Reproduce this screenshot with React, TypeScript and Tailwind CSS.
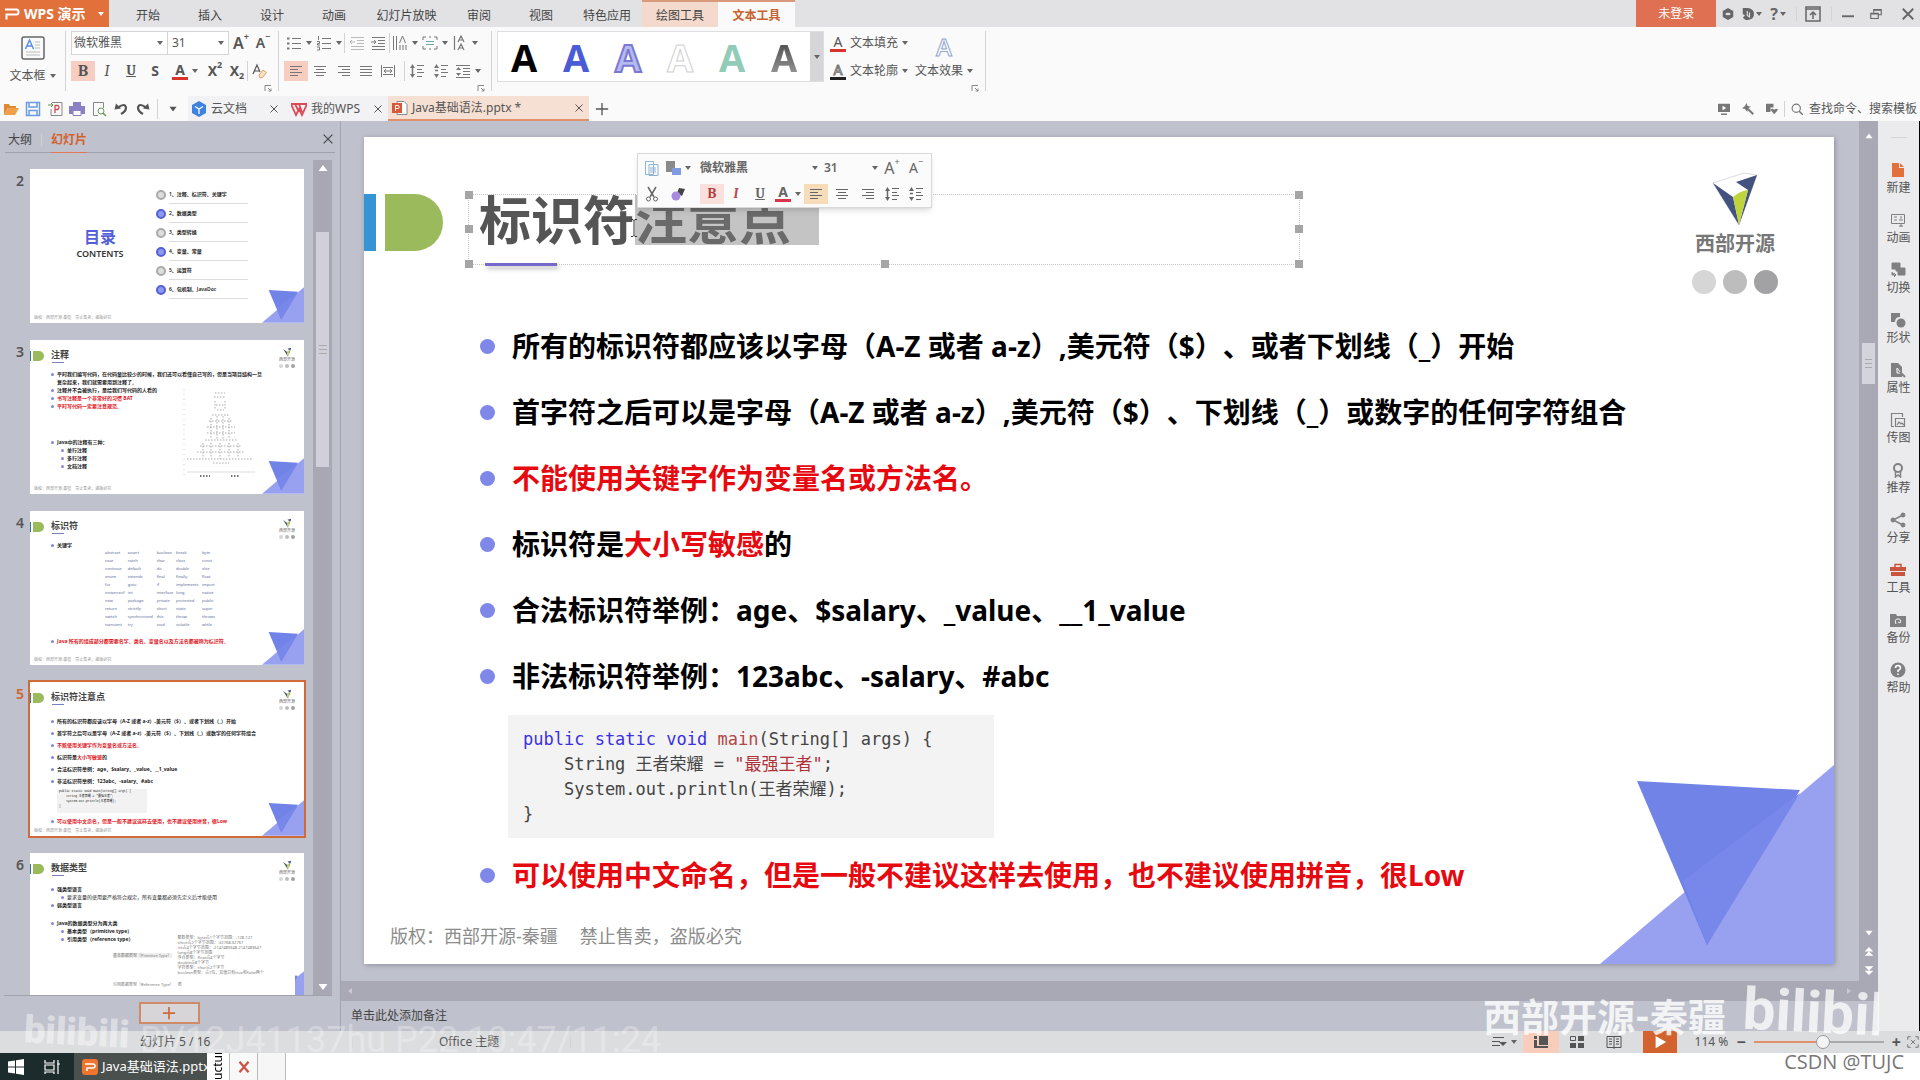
import type { ReactNode } from "react"
import { clsx } from "clsx"

const menuItems = [
  { label: "开始", width: "w-[62px]" },
  { label: "插入", width: "w-[62px]" },
  { label: "设计", width: "w-[62px]" },
  { label: "动画", width: "w-[62px]" },
  { label: "幻灯片放映", width: "w-[83px]" },
  { label: "审阅", width: "w-[62px]" },
  { label: "视图", width: "w-[62px]" },
  { label: "特色应用", width: "w-[70px]" },
]

const keywords = [
  ["abstract", "assert", "boolean", "break", "byte"],
  ["case", "catch", "char", "class", "const"],
  ["continue", "default", "do", "double", "else"],
  ["enum", "extends", "final", "finally", "float"],
  ["for", "goto", "if", "implements", "import"],
  ["instanceof", "int", "interface", "long", "native"],
  ["new", "package", "private", "protected", "public"],
  ["return", "strictfp", "short", "static", "super"],
  ["switch", "synchronized", "this", "throw", "throws"],
  ["transient", "try", "void", "volatile", "while"],
]

const contents = ["1、注释、标识符、关键字", "2、数据类型", "3、类型转换", "4、变量、常量", "5、运算符", "6、包机制、JavaDoc"]

function Caret({ className = "text-[#666]" }: { className?: string }) {
  return (
    <svg viewBox="0 0 6 4" className={clsx("h-1 w-1.5 shrink-0", className)} fill="currentColor">
      <path d="M0 0h6L3 4z" />
    </svg>
  )
}

function Icon({ children, className = "size-4", box = 16 }: { children: ReactNode; className?: string; box?: number }) {
  return (
    <svg viewBox={`0 0 ${box} ${box}`} className={clsx("shrink-0", className)} fill="none" stroke="currentColor">
      {children}
    </svg>
  )
}

function Tool({ label, children, active, className = "w-6" }: { label: string; children: ReactNode; active?: boolean; className?: string }) {
  return (
    <button aria-label={label} className={clsx("flex h-5 shrink-0 items-center justify-center gap-1", className, active && "bg-[#f6cdc0]")}>
      {children}
    </button>
  )
}

function Divider({ className = "h-5" }: { className?: string }) {
  return <span className={clsx("w-px shrink-0 bg-[#d3d3d6]", className)} />
}

function Launcher() {
  return (
    <button aria-label="更多设置" className="absolute right-1.5 bottom-1 text-[#888]">
      <Icon className="size-2" box={8}>
        <path d="M1 7V1.5h6M4 4l3 3M7 4.5V7H4.5" />
      </Icon>
    </button>
  )
}

// Letter with a small mark at its upper right, e.g. A+ or X2
function Marked({ letter, mark, className }: { letter: string; mark: string; className?: string }) {
  return (
    <span className={clsx("flex items-start", className)}>
      {letter}
      <span className="text-[9px] leading-2">{mark}</span>
    </span>
  )
}

const alignPaths = {
  left: "M2 3.5h12M2 6.5h8M2 9.5h12M2 12.5h8",
  center: "M2 3.5h12M4 6.5h8M2 9.5h12M4 12.5h8",
  right: "M2 3.5h12M6 6.5h8M2 9.5h12M6 12.5h8",
  justify: "M2 3.5h12M2 6.5h12M2 9.5h12M2 12.5h12",
}

function AlignIcon({ kind }: { kind: keyof typeof alignPaths }) {
  return (
    <Icon>
      <path d={alignPaths[kind]} />
    </Icon>
  )
}

function SpacingIcon({ down }: { down?: boolean }) {
  return (
    <Icon>
      <path d="M8 2.5h7M8 6.5h5M8 9.5h7M8 13.5h5" />
      <path d={down ? "M2 7.5h3" : "M3.5 5v6"} strokeWidth="1.5" />
      <path d="M1 5l2.5-4L6 5zM1 11l2.5 4L6 11z" fill="currentColor" stroke="none" />
    </Icon>
  )
}

function TitleBar() {
  return (
    <header className="flex h-[27px] shrink-0 bg-[#e2e2e4] text-xs text-[#444]">
      <button className="flex w-[109px] shrink-0 items-center bg-[#e2703a] pl-1 text-sm font-bold text-white">
        <Icon>
          <path d="M1 3.500h11.5q2 0 2 2.5t-2 2.5H2.500v5" strokeWidth="2" />
        </Icon>
        <span className="ml-1 whitespace-nowrap">WPS 演示</span>
        <Caret className="ml-3 text-white" />
      </button>
      <nav className="ml-2 flex shrink-0">
        {menuItems.map((item) => (
          <button key={item.label} className={clsx("pt-1", item.width)}>
            {item.label}
          </button>
        ))}
        <button className="w-[76px] border-t-2 border-[#d99a7c] bg-[#f3dacd] pt-0.5">绘图工具</button>
        <button className="w-[77px] border-t-2 border-[#d99a7c] bg-[#fafafb] pt-0.5 font-bold text-[#c8632f]">文本工具</button>
      </nav>
      <div className="ml-auto flex shrink-0 items-center text-[#666]">
        <button className="h-full w-20 bg-[#e07052] text-white">未登录</button>
        <button aria-label="设置" className="ml-1.5">
          <Icon className="size-3">
            <path d="M8 0l7 4v8l-7 4-7-4V4z" fill="currentColor" stroke="none" />
            <path d="M5 8h6" stroke="#e2e2e4" strokeWidth="3" />
          </Icon>
        </button>
        <button aria-label="皮肤" className="ml-2 flex items-center gap-0.5">
          <Icon className="size-3">
            <path d="M1 0h7q8 1 8 8t-8 8H5l-4-3 3-3-3-2z" fill="currentColor" stroke="none" />
            <path d="M7 4v6l3 2V6" stroke="#e2e2e4" strokeWidth="1.5" />
          </Icon>
          <Caret />
        </button>
        <button aria-label="帮助" className="ml-2 flex items-center gap-0.5 text-base font-bold">
          ? <Caret />
        </button>
        <Divider className="ml-2.5 h-3.5 bg-[#b5b5b8]" />
        <button aria-label="隐藏功能区" className="ml-2">
          <Icon>
            <path d="M1 1h14v14H1zM1 3h14M8 13V6M5 9l3-3 3 3" strokeWidth="1.5" />
          </Icon>
        </button>
        <Divider className="mr-2.5 ml-2.5 h-3.5 bg-[#b5b5b8]" />
        <button aria-label="最小化">
          <Icon className="size-3">
            <path d="M0 11h16" strokeWidth="2.5" />
          </Icon>
        </button>
        <button aria-label="还原" className="ml-4">
          <Icon className="size-3">
            <path d="M1 7h10v7H1zM5 6V2h10v7h-4M5 3h10M1 8h10" strokeWidth="1.5" />
          </Icon>
        </button>
        <button aria-label="关闭" className="mr-1.5 ml-5">
          <Icon className="size-3">
            <path d="M1 1l14 14M15 1L1 15" strokeWidth="2.5" />
          </Icon>
        </button>
      </div>
    </header>
  )
}

const gallery = [
  "text-black",
  "text-[#4a5bd8]",
  "text-[#b4baf2] [-webkit-text-stroke:2px_#7a78d0]",
  "text-white [-webkit-text-stroke:1px_#cfd0d2]",
  "text-[#93cbb9]",
  "bg-linear-to-b from-[#3c3c3c] to-[#a5a5a5] bg-clip-text text-transparent",
]

function Ribbon() {
  return (
    <section className="flex h-[69px] shrink-0 bg-[#fafafb] text-xs text-[#555]">
      <button className="flex w-[65px] shrink-0 flex-col items-center gap-2 pt-[9px]">
        <Icon className="size-6" box={24}>
          <rect x="1" y="1" width="22" height="22" rx="2" stroke="#666" strokeWidth="1.5" />
          <path d="M14 6h5M14 9h5M14 12h5M5 16h14M5 19h14" stroke="#bbb" />
          <path d="M4.5 13l4-9 4 9M6 10h5" stroke="#5b8fdc" strokeWidth="1.5" />
        </Icon>
        <span className="flex items-center gap-1 leading-4 whitespace-nowrap">
          文本框 <Caret />
        </span>
      </button>
      <Divider className="mt-1 h-[60px]" />
      <div className="relative w-[212px] shrink-0 pt-1 pl-[5px]">
        <div className="flex items-center">
          <label className="flex h-6 w-[97px] items-center border border-[#d5d5d8] bg-white pr-1 pl-0.5">
            <select aria-label="字体" className="min-w-0 flex-1 appearance-none text-[#555]">
              <option>微软雅黑</option>
            </select>
            <Caret />
          </label>
          <label className="-ml-px flex h-6 w-[62px] items-center border border-[#d5d5d8] bg-white pr-1 pl-1">
            <select aria-label="字号" className="min-w-0 flex-1 appearance-none text-[#555]">
              <option>31</option>
            </select>
            <Caret />
          </label>
          <Tool label="增大字号" className="w-6">
            <Marked letter="A" mark="+" className="text-base leading-5 font-semibold" />
          </Tool>
          <Tool label="减小字号" className="w-5">
            <Marked letter="A" mark="−" className="text-sm leading-5 font-semibold" />
          </Tool>
        </div>
        <div className="mt-1.5 flex items-center text-sm font-bold">
          <Tool label="加粗" active><span className="font-serif text-base">B</span></Tool>
          <Tool label="倾斜"><span className="font-serif text-base font-normal italic">I</span></Tool>
          <Tool label="下划线"><span className="font-serif underline">U</span></Tool>
          <Tool label="阴影">S</Tool>
          <Tool label="字体颜色" className="w-9">
            <span className="w-4 border-b-[3px] border-[#d8342c] leading-3.5">A</span>
            <Caret />
          </Tool>
          <Tool label="上标"><Marked letter="X" mark="2" className="leading-5" /></Tool>
          <Tool label="下标" className="w-5">
            <span className="flex items-end leading-5">X<span className="text-[9px] leading-2.5">2</span></span>
          </Tool>
          <Divider />
          <Tool label="清除格式">
            <Icon>
              <path d="M1 11L5 2l3 7M2.5 8H7" strokeWidth="1.2" />
              <path d="M7 12l4-5 3.5 2.500-4 5-2.500.5z" stroke="#e0a060" fill="#f8e3c8" />
            </Icon>
          </Tool>
        </div>
        <Launcher />
      </div>
      <Divider className="mt-1 h-[60px]" />
      <div className="relative w-[212px] shrink-0 pt-1.5 pl-[5px] text-[#777]">
        <div className="flex items-center">
          <Tool label="项目符号" className="w-[30px]">
            <Icon>
              <path d="M6 3.5h9M6 8.5h9M6 13.5h9" />
              <path d="M1 3.5h2.500M1 8.500h2.500M1 13.5h2.500" strokeWidth="2" />
            </Icon>
            <Caret />
          </Tool>
          <Tool label="编号" className="w-[30px]">
            <Icon>
              <path d="M6 3.5h9M6 8.5h9M6 13.5h9" />
              <path d="M2.5 1v4M1 6.500h2.500v2h-2V10H4M1 12h2.500v3H1" />
            </Icon>
            <Caret />
          </Tool>
          <Divider />
          <Tool label="减少缩进">
            <Icon className="size-4 text-[#bbb]">
              <path d="M2 2.5h13M8 5.5h7M8 8.5h7M2 11.5h13M2 14.5h13M6 7H1M3 5L1 7l2 2" />
            </Icon>
          </Tool>
          <Tool label="增加缩进" className="w-[18px]">
            <Icon>
              <path d="M2 2.5h13M8 5.5h7M8 8.5h7M2 11.5h13M2 14.5h13M1 7h5M4 5l2 2-2 2" />
            </Icon>
          </Tool>
          <Divider className="ml-0.5 h-5" />
          <Tool label="文字方向" className="w-[30px]">
            <Icon>
              <path d="M1.5 1v14M4.5 1v14M8 10v5M11 10v5M14 10v5M7.5 8l3-7 3 7" />
            </Icon>
            <Caret />
          </Tool>
          <Tool label="对齐文本" className="w-[30px]">
            <Icon>
              <path d="M1 5V2h3M12 2h3v3M15 11v3h-3M4 14H1v-3M7 2h2M7 14h2" />
              <path d="M4 6.5h8M4 9.5h8" stroke="#6fa8a8" />
            </Icon>
            <Caret />
          </Tool>
          <Tool label="字符间距" className="w-[30px]">
            <Icon>
              <path d="M2.5 1v14M6 7l3-6 3 6M7 5h4M6 15l3-6 3 6M7 13h4" strokeWidth="1.2" />
            </Icon>
            <Caret />
          </Tool>
        </div>
        <div className="mt-2 flex items-center">
          <Tool label="左对齐" active><AlignIcon kind="left" /></Tool>
          <Tool label="居中"><AlignIcon kind="center" /></Tool>
          <Tool label="右对齐"><AlignIcon kind="right" /></Tool>
          <Tool label="两端对齐" className="w-5"><AlignIcon kind="justify" /></Tool>
          <Tool label="分散对齐">
            <Icon>
              <path d="M1.5 2v12M14.5 2v12M3 4.5h10M3 11.5h10M4 8h8M6 6L4 8l2 2M10 6l2 2-2 2" />
            </Icon>
          </Tool>
          <Divider className="ml-1 h-5" />
          <Tool label="段前间距"><SpacingIcon /></Tool>
          <Tool label="段后间距"><SpacingIcon down /></Tool>
          <Tool label="行距" className="w-[30px]">
            <Icon>
              <path d="M1 2.5h14M8 5.5h7M8 8.5h7M8 11.5h7M1 14.5h14" />
              <path d="M1 7l2.5-3L6 7zM1 10l2.5 3L6 10z" fill="currentColor" stroke="none" />
            </Icon>
            <Caret />
          </Tool>
        </div>
        <Launcher />
      </div>
      <Divider className="mt-1 h-[60px]" />
      <div className="mt-1 ml-[5px] flex h-[51px] shrink-0 border border-[#dedee0] bg-white">
        {gallery.map((style, i) => (
          <button key={style} aria-label={`艺术字 ${i + 1}`} className="flex w-[52px] items-center justify-center">
            <span className={clsx("font-['Open_Sans'] text-[38px] leading-[48px] font-bold", style)}>A</span>
          </button>
        ))}
        <button aria-label="更多艺术字" className="flex w-[13px] items-center justify-center bg-[#d6d6da]">
          <Caret />
        </button>
      </div>
      <div className="flex w-[84px] shrink-0 flex-col gap-3 pt-2 pl-1.5">
        <button className="flex h-4 items-center gap-1 whitespace-nowrap">
          <span className="w-4 shrink-0 border-b-[3px] border-[#d8342c] text-sm leading-3.5">A</span>
          文本填充 <Caret />
        </button>
        <button className="flex h-4 items-center gap-1 whitespace-nowrap">
          <span className="w-4 shrink-0 border-b-[3px] border-[#222] text-sm leading-3.5 text-white [-webkit-text-stroke:1px_#777]">A</span>
          文本轮廓 <Caret />
        </button>
      </div>
      <div className="relative w-[77px] shrink-0 pl-[7px]">
        <button className="flex flex-col items-center pt-2">
          <span className="font-['Open_Sans'] text-2xl leading-6 font-semibold text-white [-webkit-text-stroke:1px_#8fa3cc]">A</span>
          <span className="mt-1 flex items-center gap-1 leading-4 whitespace-nowrap">
            文本效果 <Caret />
          </span>
        </button>
        <Launcher />
      </div>
      <Divider className="mt-1 h-[60px]" />
    </section>
  )
}

function DocTab({ icon, title, className }: { icon: ReactNode; title: string; className?: string }) {
  return (
    <div className={clsx("flex shrink-0 items-center pr-1.5", className)}>
      {icon}
      <button className="ml-1 whitespace-nowrap">{title}</button>
      <button aria-label={`关闭 ${title}`} className="ml-auto">
        <Icon className="size-2">
          <path d="M1 1l14 14M15 1L1 15" strokeWidth="2" />
        </Icon>
      </button>
    </div>
  )
}

function DocTabs() {
  return (
    <section className="flex h-[25px] shrink-0 bg-[#fafafb] text-xs text-[#555]">
      <div className="flex w-[188px] shrink-0 items-center gap-1.5 pl-[3px]">
        <button aria-label="打开">
          <Icon>
            <path d="M1 14V3h5l1 2h6v2H5z" fill="#e08a35" stroke="none" />
            <path d="M1 14l4-7h11l-4 7z" fill="#f0a04a" stroke="none" />
          </Icon>
        </button>
        <button aria-label="保存" className="text-[#6b9be0]">
          <Icon>
            <path d="M1.5 1.5h13v13h-13zM4 2v4h8V2M4 14V9.5h8V14" strokeWidth="1.5" />
          </Icon>
        </button>
        <button aria-label="输出为PDF" className="text-[#888]">
          <Icon>
            <path d="M5 1.5h10v13H4V8" />
            <path d="M8 12V4.5h3q2 1.500 0 4H8" stroke="#d05050" strokeWidth="1.300" />
            <path d="M1 4h5M4 2l2 2-2 2" stroke="#5a9a4a" />
          </Icon>
        </button>
        <button aria-label="打印">
          <Icon>
            <path d="M4 1h8v4H4zM0 5h16v8H0z" fill="#8c80c4" stroke="none" />
            <path d="M4 9.5h8v5H4z" fill="#fff" stroke="#8c80c4" />
          </Icon>
        </button>
        <button aria-label="打印预览" className="text-[#888]">
          <Icon>
            <path d="M7 14.5H2.500v-13h10V7" />
            <circle cx="10" cy="10" r="3" stroke="#6d9a55" />
            <path d="M12 12l3 3" stroke="#6d9a55" strokeWidth="1.5" />
          </Icon>
        </button>
        <button aria-label="撤销" className="text-[#555]">
          <Icon>
            <path d="M5 6.5q7-5 8 0 0 4-5 6.500" strokeWidth="2.200" />
            <path d="M1.5 8.500l1.500-6 5 5z" fill="currentColor" stroke="none" />
          </Icon>
        </button>
        <button aria-label="恢复" className="text-[#555]">
          <Icon>
            <path d="M11 6.5q-7-5-8 0 0 4 5 6.500" strokeWidth="2.200" />
            <path d="M14.5 8.500l-1.500-6-5 5z" fill="currentColor" stroke="none" />
          </Icon>
        </button>
        <Divider />
        <button aria-label="自定义" className="ml-1.5"><Caret className="scale-125 text-[#555]" /></button>
      </div>
      <DocTab
        title="云文档"
        className="w-24 bg-[#f2f2f4] pl-[3px]"
        icon={
          <Icon>
            <path d="M8 0l7 4v8l-7 4-7-4V4z" fill="#3f82e0" stroke="none" />
            <path d="M4 5.5l4 2.500 4-2.500M8 8v5" stroke="#fff" strokeWidth="1.300" />
          </Icon>
        }
      />
      <DocTab
        title="我的WPS"
        className="w-[104px] bg-[#f2f2f4] pl-[7px]"
        icon={
          <Icon className="size-4 text-[#dc4a55]">
            <path d="M0 3h16l-5 11-3-6-3 6zM4 3l4 8M8 3l3 8" strokeWidth="1.8" />
          </Icon>
        }
      />
      <DocTab
        title="Java基础语法.pptx *"
        className="w-[201px] border-b-2 border-[#e0906c] bg-[#f5e0d3] pl-1"
        icon={
          <Icon>
            <path d="M5 1.5h7l3 3v10H5z" fill="#fff" stroke="#888" />
            <path d="M0 3h10v10H0z" fill="#d8593a" stroke="none" />
            <path d="M3.5 11V5.500h3q1.500 1.500 0 3h-3" stroke="#fff" />
          </Icon>
        }
      />
      <button aria-label="新建标签" className="ml-1.5">
        <Icon className="size-3.5">
          <path d="M8 1v14M1 8h14" strokeWidth="1.5" />
        </Icon>
      </button>
      <div className="ml-auto flex shrink-0 items-center text-[#777]">
        <button aria-label="播放">
          <Icon className="size-3">
            <path d="M0 1h16v11H0zM4 14h8v2H4z" fill="currentColor" stroke="none" />
            <path d="M6 3.5v6l5-3z" fill="#fff" stroke="none" />
          </Icon>
        </button>
        <button aria-label="魔法棒" className="ml-3">
          <Icon className="size-3">
            <path d="M6 6l9 9" strokeWidth="2.5" />
            <path d="M6 0l1.500 4L12 5 8 7l-1 5-3-4-4-1 4-3z" fill="currentColor" stroke="none" />
          </Icon>
        </button>
        <button aria-label="收藏" className="ml-3">
          <Icon className="size-3">
            <path d="M0 1h10v5H6v6H0zM11 15L6 9q2-3 5 0 3-3 5 0z" fill="currentColor" stroke="none" />
          </Icon>
        </button>
        <Divider className="mx-1.5 h-4" />
        <label className="flex items-center gap-1.5">
          <Icon className="size-3">
            <circle cx="7" cy="7" r="5.5" strokeWidth="1.5" />
            <path d="M11 11l5 5" strokeWidth="2" />
          </Icon>
          <input aria-label="查找命令" className="w-[111px] text-[#555] outline-none" defaultValue="查找命令、搜索模板" />
        </label>
      </div>
    </section>
  )
}

function Corner({ className }: { className: string }) {
  return (
    <svg viewBox="0 0 234 199" className={clsx("absolute right-0 bottom-0", className)}>
      <path d="M0 199L234 0v199z" fill="#98a0f0" />
      <path d="M37 16l163 9-93 155z" fill="#7183e6" />
      <path d="M83 116L200 28l-93 152z" fill="#7887ea" />
    </svg>
  )
}

function LogoMark({ className }: { className: string }) {
  return (
    <svg viewBox="0 0 46 54" className={className}>
      <path d="M1 11L32 1l13 2-18 50z" fill="#fff" stroke="#c5c5cc" strokeWidth=".6" />
      <path d="M1 11l20 14 6 28z" fill="#43527f" />
      <path d="M45 3L24 10l12 8-9 35z" fill="#43527f" />
      <path d="M21 25q7-6 15-7l-9 35z" fill="#bfd43c" />
    </svg>
  )
}

function ThumbLine({ children, red, sub, plain }: { children: ReactNode; red?: boolean; sub?: boolean; plain?: boolean }) {
  return (
    <p className={clsx("flex items-center gap-[3px] whitespace-nowrap", sub && "pl-2.5", red && "text-[#e0141c]", !plain && "font-bold")}>
      <i className="size-[3px] shrink-0 rounded-full bg-[#7f87e8]" />
      <span>{children}</span>
    </p>
  )
}

function Thumb({ index, title, children, active }: { index: number; title?: string; children: ReactNode; active?: boolean }) {
  return (
    <li className="flex shrink-0">
      <span className={clsx("w-[30px] pt-0.5 pr-1.5 text-right text-sm font-semibold", active ? "text-[#d2622e]" : "text-[#555]")}>{index}</span>
      <div
        className={clsx(
          "relative h-[154px] w-[274px] overflow-hidden bg-white text-[5px] leading-2 text-[#222]",
          active && "outline-2 outline-[#cf6a3a]",
        )}
      >
        {title && (
          <div className="flex h-[30px] items-start pt-[9px]">
            <i className="mt-0.5 h-2.5 w-px bg-[#2f7a8a]" />
            <i className="mt-0.5 ml-0.5 h-2.5 w-[11px] rounded-r-full bg-[#9aba5c]" />
            <div className="ml-[7px] text-[9px] leading-[11px] font-semibold text-[#444]">
              {title}
              <i className="mt-0.5 ml-px block h-px w-3 bg-[#7a7fc0]" />
            </div>
            <div className="mr-[9px] ml-auto flex flex-col items-center text-[4px] leading-[6px] text-[#666]">
              <LogoMark className="-mt-0.5 h-2.5" />
              <span>西部开源</span>
              <span className="mt-px flex gap-0.5">
                <i className="size-1 rounded-full bg-[#d6d6d6]" />
                <i className="size-1 rounded-full bg-[#bdbdbd]" />
                <i className="size-1 rounded-full bg-[#a2a2a4]" />
              </span>
            </div>
          </div>
        )}
        {children}
        <p className="absolute bottom-0.5 left-1 text-[4px] leading-1.5 text-[#999]">版权：西部开源-秦疆　禁止售卖，盗版必究</p>
        <Corner className={clsx("h-9 w-[42px]", index === 6 && "[clip-path:inset(0_0_0_33px)]")} />
      </div>
    </li>
  )
}

function SlidePanel() {
  return (
    <aside className="flex w-[341px] shrink-0 flex-col border-r border-[#a3a4b2] bg-[#bfc1cc] text-[#444]">
      <div className="mx-[5px] flex h-8 shrink-0 items-center border-b border-[#9fa1ac] pl-[3px] text-xs">
        <button className="pt-1.5">大纲</button>
        <Divider className="mx-[9px] mt-1.5 h-3 bg-[#777]" />
        <button className="h-full pt-1.5 font-bold text-[#d2622e] shadow-[0_1px_0_#e0765a]">幻灯片</button>
        <button aria-label="关闭窗格" className="ml-auto pt-1">
          <Icon className="mr-0.5 size-2.5">
            <path d="M1 1l14 14M15 1L1 15" strokeWidth="1.8" />
          </Icon>
        </button>
      </div>
      <div className="mr-2 ml-1 flex min-h-0 flex-1 border-b border-[#9fa1ac]">
        <ol className="-ml-1 flex min-h-0 flex-1 flex-col gap-[17px] overflow-hidden pt-4">
          <Thumb index={2}>
            <div className="flex">
              <div className="w-[126px] pt-[58px] pl-[14px] text-center">
                <p className="text-base leading-5 font-bold text-[#5560d8]">目录</p>
                <p className="text-[9px] leading-3.5 font-semibold text-[#333]">CONTENTS</p>
              </div>
              <ul className="w-[92px] pt-4">
                {contents.map((item, i) => (
                  <li key={item} className="flex h-[19px] items-center gap-[3px] font-semibold whitespace-nowrap">
                    <i className={clsx("size-2.5 shrink-0 rounded-full border-2", i % 2 ? "border-[#5560d8] bg-[#8f97ee]" : "border-[#aaa] bg-[#ddd]")} />
                    <span className="flex h-full flex-1 items-center border-b border-[#ddd]">{item}</span>
                  </li>
                ))}
              </ul>
            </div>
          </Thumb>
          <Thumb index={3} title="注释">
            <div className="flex flex-col pl-[21px]">
              <ThumbLine>平时我们编写代码，在代码量比较少的时候，我们还可以看懂自己写的，但是当项目结构一旦</ThumbLine>
              <p className="pl-1.5 font-bold">复杂起来，我们就需要用到注释了。</p>
              <ThumbLine>注释并不会被执行，是给我们写代码的人看的</ThumbLine>
              <ThumbLine red>书写注释是一个非常好的习惯 BAT</ThumbLine>
              <ThumbLine red>平时写代码一定要注意规范。</ThumbLine>
              <div className="mt-7 flex flex-col">
                <ThumbLine>Java中的注释有三种：</ThumbLine>
                <ThumbLine sub>单行注释</ThumbLine>
                <ThumbLine sub>多行注释</ThumbLine>
                <ThumbLine sub>文档注释</ThumbLine>
              </div>
            </div>
            <svg viewBox="0 0 74 94" className="absolute top-12 left-[153px] h-[94px] w-[74px]" fill="none" stroke="#aaa" strokeDasharray="1.5 1.5">
              <path d="M1 1v90" stroke="#ccc" strokeDasharray="1 4" />
              <path d="M32 5h10M31 9h12M32 13v9M42 13v9M33 17h8M34 22h7M29 27h18M26 33h24M24 39h28M24 45h28M28 30v20M34 28v24M40 28v24M46 30v20M22 52h32M17 58h42M14 64h48M20 55v14M28 55v14M37 55v16M46 55v14M55 55v14M4 71h66M30 75h16" />
              <path d="M4 84h68" stroke="#ddd" strokeDasharray="none" />
              <path d="M17 88h10M48 88h9" stroke="#777" strokeWidth="2" />
            </svg>
          </Thumb>
          <Thumb index={4} title="标识符">
            <div className="pl-[21px]">
              <ThumbLine>关键字</ThumbLine>
              <table className="ml-[54px] w-28 text-left text-[4px] leading-2 text-[#5a6a98]">
                <tbody>
                  {keywords.map((row) => (
                    <tr key={row[0]}>
                      {row.map((word) => (
                        <td key={word}>{word}</td>
                      ))}
                    </tr>
                  ))}
                </tbody>
              </table>
              <div className="mt-2">
                <ThumbLine red>Java 所有的组成部分都需要名字。类名、变量名以及方法名都被称为标识符。</ThumbLine>
              </div>
            </div>
          </Thumb>
          <Thumb index={5} title="标识符注意点" active>
            <div className="flex flex-col gap-1 pt-[5px] pl-[21px]">
              <ThumbLine>所有的标识符都应该以字母（A-Z 或者 a-z）,美元符（$）、或者下划线（_）开始</ThumbLine>
              <ThumbLine>首字符之后可以是字母（A-Z 或者 a-z）,美元符（$）、下划线（_）或数字的任何字符组合</ThumbLine>
              <ThumbLine red>不能使用关键字作为变量名或方法名。</ThumbLine>
              <ThumbLine>标识符是<span className="text-[#e0141c]">大小写敏感</span>的</ThumbLine>
              <ThumbLine>合法标识符举例：age、$salary、_value、__1_value</ThumbLine>
              <ThumbLine>非法标识符举例：123abc、-salary、#abc</ThumbLine>
              <pre className="ml-1.5 w-[90px] bg-[#f2f2f2] pb-1 pl-0.5 font-['Liberation_Mono','Noto_Sans_CJK_SC',monospace] text-[3px] leading-[5px]">
                {'public static void main(String[] args) {\n    String 王者荣耀 = "最强王者";\n    System.out.println(王者荣耀);\n}'}
              </pre>
              <ThumbLine red>可以使用中文命名，但是一般不建议这样去使用，也不建议使用拼音，很Low</ThumbLine>
            </div>
          </Thumb>
          <Thumb index={6} title="数据类型">
            <div className="flex flex-col pt-0.5 pl-[21px]">
              <ThumbLine>强类型语言</ThumbLine>
              <ThumbLine sub plain>要求变量的使用要严格符合规定，所有变量都必须先定义后才能使用</ThumbLine>
              <ThumbLine>弱类型语言</ThumbLine>
              <div className="mt-2.5 flex flex-col">
                <ThumbLine>Java的数据类型分为两大类</ThumbLine>
                <ThumbLine sub>基本类型（primitive type）</ThumbLine>
                <ThumbLine sub>引用类型（reference type）</ThumbLine>
              </div>
              <div className="-mt-2 flex gap-1.5 pl-[62px] text-[4px] leading-[5px] whitespace-nowrap text-[#777]">
                <span className="self-center bg-[#eee]">基本数据类型（Primitive Type）</span>
                <span>
                  整数类型：byte占1个字节范围：-128-127
                  <br />
                  short占2个字节范围：-32768-32767
                  <br />
                  int占4个字节范围：-2147483648-2147483647
                  <br />
                  long占8个字节范围
                  <br />
                  浮点类型：float占4个字节
                  <br />
                  double占8个字节
                  <br />
                  字符类型：char占2个字节
                  <br />
                  boolean类型：占1位，其值只有true和false两个
                </span>
              </div>
              <p className="mt-1.5 pl-[62px] text-[4px] text-[#777]">引用数据类型（Reference Type）　类</p>
            </div>
          </Thumb>
        </ol>
        <div className="mt-[7px] flex w-[19px] shrink-0 flex-col items-center bg-[#a7a8b3] py-1.5 text-white">
          <Caret className="scale-150 rotate-180" />
          <div className="mt-[62px] flex h-[235px] w-[13px] flex-col items-center justify-center gap-[3px] bg-[#cfd0d9]">
            <i className="h-px w-2 bg-[#aaa]" />
            <i className="h-px w-2 bg-[#aaa]" />
            <i className="h-px w-2 bg-[#aaa]" />
          </div>
          <Caret className="mt-auto scale-150" />
        </div>
      </div>
      <div className="flex h-[35px] shrink-0 justify-center pt-1.5 pr-0.5">
        <button aria-label="新建幻灯片" className="flex h-[22px] w-[61px] items-center justify-center border-2 border-[#cf8a68] bg-[#d8d5d8] text-[#cf6a3a]">
          <Icon className="size-3.5">
            <path d="M8 1v14M1 8h14" strokeWidth="2" />
          </Icon>
        </button>
      </div>
    </aside>
  )
}

function Bullet({ children, red }: { children: ReactNode; red?: boolean }) {
  return (
    <li className={clsx("flex h-[66px] items-center gap-[17px] whitespace-nowrap", red && "text-[#e60a10]")}>
      <i className="size-[15px] shrink-0 rounded-full bg-[#7f87e8]" />
      <span>{children}</span>
    </li>
  )
}

const handles = [
  "-top-1 -left-1",
  "top-[30px] -left-1",
  "-bottom-1 -left-1",
  "-bottom-1 left-[412px]",
  "-top-1 -right-1",
  "top-[30px] -right-1",
  "-bottom-1 -right-1",
]

// Floating format bar that opens over a text selection
function MiniToolbar() {
  return (
    <div className="absolute -top-[42px] left-[168px] flex h-[55px] w-[295px] flex-col justify-center gap-1.5 border border-[#d8d8d8] bg-[#fbfbfb] px-1 text-xs text-[#666] shadow-md">
      <div className="flex items-center">
        <Tool label="复制" className="w-5">
          <Icon className="size-4 text-[#8fb4d4]">
            <path d="M1.5 1.5h8v13h-8zM5 4.5h9v11H5zM7 7v6M9 7v6M11 7v6" />
          </Icon>
        </Tool>
        <Tool label="粘贴" className="w-8">
          <Icon>
            <path d="M1 1h9v11H1z" fill="#8a8a8a" stroke="none" />
            <path d="M7 8h9v7H7z" fill="#7f9ae0" stroke="none" />
          </Icon>
          <Caret />
        </Tool>
        <select aria-label="浮动栏字体" className="ml-1.5 w-28 appearance-none font-semibold"><option>微软雅黑</option></select>
        <Caret />
        <select aria-label="浮动栏字号" className="ml-1.5 w-12 appearance-none font-semibold"><option>31</option></select>
        <Caret />
        <Tool label="增大" className="w-7"><Marked letter="A" mark="+" className="text-base leading-5" /></Tool>
        <Tool label="减小" className="w-5"><Marked letter="A" mark="−" className="text-sm leading-5" /></Tool>
      </div>
      <div className="flex items-center text-sm font-bold">
        <Tool label="剪切" className="w-5">
          <Icon>
            <path d="M4 1l6 10M12 1L6 11" strokeWidth="1.5" />
            <circle cx="4.5" cy="13" r="2" />
            <circle cx="11.5" cy="13" r="2" />
          </Icon>
        </Tool>
        <Tool label="格式刷" className="w-8">
          <Icon>
            <path d="M9 2l6 1-3 7-5-3z" fill="#444" stroke="none" />
            <circle cx="6" cy="10" r="4.5" fill="#a98ae0" stroke="none" />
          </Icon>
        </Tool>
        <Tool label="加粗文字" className="ml-1.5 w-6 bg-[#fae0dc] text-[#b04040]"><span className="font-serif">B</span></Tool>
        <Tool label="倾斜文字" className="w-6 text-[#c04848]"><span className="font-serif italic">I</span></Tool>
        <Tool label="下划线文字"><span className="font-serif underline">U</span></Tool>
        <Tool label="文字颜色" className="w-8">
          <span className="w-4 border-b-[3px] border-[#d8344c] leading-3.5">A</span>
          <Caret />
        </Tool>
        <Tool label="文字左对齐" className="w-6 bg-[#f6dcb8]"><AlignIcon kind="left" /></Tool>
        <Tool label="文字居中" className="w-7"><AlignIcon kind="center" /></Tool>
        <Tool label="文字右对齐"><AlignIcon kind="right" /></Tool>
        <Tool label="增大行距"><SpacingIcon /></Tool>
        <Tool label="减小行距"><SpacingIcon down /></Tool>
      </div>
    </div>
  )
}

function Slide() {
  return (
    <article className="relative h-full flex-1 overflow-hidden bg-white shadow-[1px_1px_5px_#8d8fa0]">
      <Corner className="h-[199px] w-[234px]" />
      <header className="flex items-start pt-[35px]">
        <i className="mt-[22px] h-[57px] w-3 bg-[#3494d4]" />
        <i className="mt-[22px] ml-[9px] h-[57px] w-[58px] rounded-r-full bg-[#9aba5c]" />
        <div className="relative mt-[22px] ml-[25px] h-[71px] w-[832px] border border-dotted border-[#c4c4c4]">
          <h1 className="flex h-[50px] items-center pl-[10px] text-[52px] leading-[50px] font-bold whitespace-nowrap text-[#555]">
            标识符<span className="h-[50px] w-[184px] bg-[#c4c4c4] text-[#6a6a6a]">注意点</span>
          </h1>
          <i className="absolute -bottom-0.5 left-4 h-[3px] w-18 bg-[#7468c8] shadow-[2px_3px_4px_#bbb]" />
          {handles.map((place) => (
            <i key={place} className={clsx("absolute size-2 bg-[#a5a5a5]", place)} />
          ))}
          <svg viewBox="0 0 8 18" className="absolute top-6 left-[161px] h-[18px] w-2" fill="none" stroke="#333">
            <path d="M1 .5h2l1 1 1-1h2M4 1v16M1 17.5h2l1-1 1 1h2" />
          </svg>
          <MiniToolbar />
        </div>
        <div className="mr-14 ml-auto flex flex-col items-center text-[#777]">
          <LogoMark className="h-[54px]" />
          <p className="mt-1.5 text-xl leading-6 font-bold">西部开源</p>
          <div className="mt-3.5 flex gap-[7px]">
            <i className="size-6 rounded-full bg-[#d6d6d6]" />
            <i className="size-6 rounded-full bg-[#bdbdbd]" />
            <i className="size-6 rounded-full bg-[#a2a2a4]" />
          </div>
        </div>
      </header>
      <ul className="relative mt-[19px] pl-[116px] text-[28px] font-bold text-black">
        <Bullet>所有的标识符都应该以字母（A-Z 或者 a-z）,美元符（$）、或者下划线（_）开始</Bullet>
        <Bullet>首字符之后可以是字母（A-Z 或者 a-z）,美元符（$）、下划线（_）或数字的任何字符组合</Bullet>
        <Bullet red>不能使用关键字作为变量名或方法名。</Bullet>
        <Bullet>标识符是<span className="text-[#e60a10]">大小写敏感</span>的</Bullet>
        <Bullet>合法标识符举例：age、$salary、_value、__1_value</Bullet>
        <Bullet>非法标识符举例：123abc、-salary、#abc</Bullet>
        <li className="mt-1.5 mb-1 ml-7 h-[123px] w-[486px] bg-[#f3f3f3] pt-3 pl-[15px]">
          <pre className="font-['DejaVu_Sans_Mono','Noto_Sans_CJK_SC',monospace] text-[17px] leading-[25px] font-normal text-[#444]">
            <span className="text-[#3b30e0]">public static void</span> <span className="text-[#b04848]">main</span>
            {"(String[] args) {\n    String 王者荣耀 = "}
            <span className="text-[#b03038]">"最强王者"</span>
            {";\n    System.out.println(王者荣耀);\n}"}
          </pre>
        </li>
        <Bullet red>可以使用中文命名，但是一般不建议这样去使用，也不建议使用拼音，很Low</Bullet>
      </ul>
      <footer className="mt-4 flex gap-[22px] pl-[26px] text-lg leading-6 text-[#8c8c8c]">
        <span>版权：西部开源-秦疆</span>
        <span>禁止售卖，盗版必究</span>
      </footer>
    </article>
  )
}

const sideTools: { label: string; color?: string; icon: ReactNode }[] = [
  { label: "新建", color: "text-[#e2703a]", icon: <path d="M2 1h7v5h5v9H2zM10 1l4 4h-4z" fill="currentColor" stroke="none" /> },
  { label: "动画", icon: <path d="M1.5 2.5h13v9h-13zM4 5h3M4 8h3M9 8h4M11 4v3M9 14h4M11 11v4" /> },
  { label: "切换", icon: <path d="M2 1h8v5h5v7H8V9H6V7H2zM2 10v3h4M4 11l2 2-2 2" fill="currentColor" stroke="currentColor" /> },
  {
    label: "形状",
    icon: (
      <>
        <path d="M1 1h9v4q-5 0-5 5H1z" fill="currentColor" stroke="none" />
        <circle cx="11" cy="11" r="4.5" fill="currentColor" stroke="none" />
      </>
    ),
  },
  {
    label: "属性",
    icon: (
      <>
        <path d="M1 1h7l4 4v10H1z" fill="currentColor" stroke="none" />
        <path d="M7 6v5h4z" stroke="#fff" />
        <path d="M10 10l5 5" strokeWidth="2" />
      </>
    ),
  },
  { label: "传图", icon: <path d="M4 14.5H1.500v-13h11V5M5.500 6.500h9v8h-9zM7 13l2-3 2 2 1-1 2 2" strokeWidth="1.2" /> },
  {
    label: "推荐",
    icon: (
      <>
        <circle cx="8" cy="6" r="4" strokeWidth="2" />
        <path d="M5.5 9v6L8 13l2.500 2V9" strokeWidth="1.5" />
      </>
    ),
  },
  {
    label: "分享",
    icon: (
      <>
        <path d="M13 3L3 8l10 5" strokeWidth="1.5" />
        <circle cx="13" cy="3" r="2" fill="currentColor" />
        <circle cx="3" cy="8" r="2" fill="currentColor" />
        <circle cx="13" cy="13" r="2" fill="currentColor" />
      </>
    ),
  },
  {
    label: "工具",
    color: "text-[#c9563c]",
    icon: (
      <>
        <path d="M0 5h16v4H0zM1 10h14v4H1z" fill="currentColor" stroke="none" />
        <path d="M5 5V2.500h6V5" strokeWidth="1.5" />
      </>
    ),
  },
  {
    label: "备份",
    icon: (
      <>
        <path d="M0 2h6l1 2h9v11H0z" fill="currentColor" stroke="none" />
        <path d="M6 12q-2-5 2-5 4 0 2 4l-2-1" stroke="#fff" />
      </>
    ),
  },
  {
    label: "帮助",
    icon: (
      <>
        <circle cx="8" cy="8" r="7.5" fill="currentColor" stroke="none" />
        <path d="M5.5 6q0-2.500 2.500-2.500T10.500 6q0 1.500-2.500 2.500V10M8 11.500V13" stroke="#fff" strokeWidth="1.5" />
      </>
    ),
  },
]

function ToolSidebar() {
  return (
    <aside className="flex w-[42px] shrink-0 flex-col items-center border-r border-black bg-[#ebebed] text-xs text-[#555]">
      <i className="mt-4 mb-6 h-px w-4 bg-[#d5d5d8]" />
      <div className="flex flex-col gap-4">
        {sideTools.map((tool) => (
          <button key={tool.label} className="flex h-[34px] flex-col items-center gap-0.5 leading-4">
            <Icon className={clsx("size-4", tool.color ?? "text-[#808083]")}>{tool.icon}</Icon>
            {tool.label}
          </button>
        ))}
      </div>
    </aside>
  )
}

function Editor() {
  return (
    <main className="flex min-w-0 flex-1 flex-col bg-[#bfc1cc]">
      <div className="flex min-h-0 flex-1">
        <div className="flex min-w-0 flex-1 pt-4 pr-[25px] pb-[17px] pl-[23px]">
          <Slide />
        </div>
        <div className="flex w-[19px] shrink-0 flex-col items-center bg-[#a8a9b5] pt-[13px] pb-1.5 text-white">
          <Caret className="scale-125 rotate-180" />
          <div className="mt-[205px] flex h-[41px] w-[13px] flex-col items-center justify-center gap-[3px] bg-[#d3d4dc]">
            <i className="h-px w-[7px] bg-[#aaa]" />
            <i className="h-px w-[7px] bg-[#aaa]" />
            <i className="h-px w-[7px] bg-[#aaa]" />
          </div>
          <Caret className="mt-auto scale-125" />
          <button aria-label="上一张" className="mt-3">
            <Icon className="size-2.5"><path d="M8 0l7 7H1zM8 7l7 7H1z" fill="currentColor" stroke="none" /></Icon>
          </button>
          <button aria-label="下一张" className="mt-2">
            <Icon className="size-2.5"><path d="M8 9L1 2h14zM8 16L1 9h14z" fill="currentColor" stroke="none" /></Icon>
          </button>
        </div>
      </div>
      <div className="flex h-5 shrink-0 items-center justify-between bg-[#a8a9b5] px-1.5 text-[#c9cad4]">
        <Caret className="rotate-90" />
        <Caret className="mr-5 -rotate-90" />
      </div>
      <p className="flex h-[30px] shrink-0 items-center pl-2.5 text-xs text-[#444]">单击此处添加备注</p>
    </main>
  )
}

function StatusBar() {
  return (
    <footer className="flex h-[22px] shrink-0 items-center bg-[#dcdddf] text-xs text-[#555]">
      <span className="ml-[140px] w-[212px]">幻灯片 5 / 16</span>
      <Divider className="h-3 bg-[#999]" />
      <span className="w-[217px] pl-[86px]">Office 主题</span>
      <Divider className="h-3 bg-[#999]" />
      <div className="mr-px ml-auto flex h-full items-center">
        <button aria-label="备注" className="flex w-8 items-center gap-1">
          <Icon><path d="M2 3.5h11M1 7.5h8M1 11.5h8" /><path d="M8 8h8l-4 4z" fill="currentColor" stroke="none" /></Icon>
          <Caret />
        </button>
        <button aria-label="普通视图" className="flex h-full w-9 items-center justify-center bg-[#f8cdbc]">
          <Icon><path d="M1 2h3v3H1zM1 6h3v6h11v2H1zM6 2h9v9H6z" fill="currentColor" stroke="none" /></Icon>
        </button>
        <button aria-label="幻灯片浏览" className="flex w-[37px] justify-center">
          <Icon><path d="M1.5 2.5h5v4h-5z" /><path d="M9 2h6v5H9zM1 9h6v5H1zM9 9h6v5H9z" fill="currentColor" stroke="none" /></Icon>
        </button>
        <button aria-label="阅读视图" className="flex w-[37px] justify-center">
          <Icon><path d="M1 2.5h14v11H1zM8 2v13M3 5h3M3 7.5h3M3 10h3M10 5h3M10 7.5h3M10 10h3" /></Icon>
        </button>
        <button aria-label="放映" className="mx-2.5 flex h-full w-[34px] items-center justify-center bg-[#d2622e]">
          <Icon className="size-3.5"><path d="M3 1l12 7-12 7z" fill="#fff" stroke="none" /></Icon>
        </button>
        <span className="ml-2 w-[42px] whitespace-nowrap">114 %</span>
        <button aria-label="缩小" className="text-base font-bold">−</button>
        <div className="relative mx-2 flex w-[130px] items-center">
          <input aria-label="显示比例" type="range" min="0" max="264" defaultValue="138" className="absolute inset-0 w-full opacity-0" />
          <i className="h-0.5 w-[62px] bg-[#e0906c]" />
          <i className="size-3.5 rounded-full border border-[#999] bg-[#f4f4f4]" />
          <i className="h-0.5 flex-1 bg-[#aaa]" />
        </div>
        <button aria-label="放大" className="text-base font-bold">+</button>
        <Icon className="ml-1.5 size-3"><path d="M1 5V1h4M1 11v4h4M11 1h4v4M11 15h4v-4M5 5l6 6M11 5l-6 6" /></Icon>
      </div>
    </footer>
  )
}

function TaskBar() {
  return (
    <div className="flex h-[27px] shrink-0 overflow-hidden bg-white text-[13px]">
      <div className="flex w-[74px] shrink-0 items-center justify-between bg-[#1c2c2c] pr-3.5 pl-2 text-white">
        <button aria-label="开始菜单">
          <Icon><path d="M0 2.5l7-1v6H0zM8 1.300L16 0v7.500H8zM0 8.500h7v6l-7-1zM8 8.500h8V16l-8-1.300z" fill="currentColor" stroke="none" /></Icon>
        </button>
        <button aria-label="任务视图">
          <Icon><path d="M1 1v3h9V1M1 6h9v5H1zM1 15v-2h9v2M14 1v14M13 5h3" strokeWidth="1.2" /></Icon>
        </button>
      </div>
      <button className="flex w-[133px] shrink-0 items-center gap-1 bg-[#4a504e] pl-2 whitespace-nowrap text-white">
        <Icon>
          <rect width="16" height="16" rx="3" fill="#ee7430" stroke="none" />
          <path d="M3 5h8q2 0 2 2t-2 2H5v3" stroke="#fff" strokeWidth="1.5" />
        </Icon>
        Java基础语法.pptx
      </button>
      <div className="flex w-[23px] items-end justify-center border-r border-[#bbb] text-xs leading-6 text-black">
        <span className="rotate-180 [writing-mode:vertical-rl]">uctur</span>
      </div>
      <button aria-label="关闭任务" className="flex w-7 items-center justify-center border-r border-[#bbb] bg-[#f8f8f8] text-[#cc5248]">
        <Icon className="size-3"><path d="M2 1l12 14M14 1L2 15" strokeWidth="3" /></Icon>
      </button>
      <div className="w-7 border-r border-[#bbb] bg-[#f6f6f6]" />
    </div>
  )
}

function Watermarks() {
  return (
    <div className="pointer-events-none absolute inset-x-0 bottom-0 font-['Roboto','Noto_Sans_CJK_SC',sans-serif] whitespace-nowrap">
      <span className="absolute bottom-6 left-6 rotate-3 text-[38px] leading-[48px] font-black text-white/45">bilibili</span>
      <span className="absolute bottom-5 left-[140px] text-4xl leading-10 text-white/30">BV12J41137hu P22 10:47/11:24</span>
      <span className="absolute right-[194px] bottom-10 text-[38px] leading-[44px] font-bold text-white/80">西部开源-秦疆</span>
      <div className="absolute right-[41px] bottom-8 w-[136px] overflow-hidden">
        <span className="block rotate-3 text-[58px] leading-[72px] font-bold text-white/75">bilibili</span>
      </div>
      <span className="absolute right-4 bottom-1.5 font-['Open_Sans'] text-xl leading-6 text-[#777]">CSDN @TUJC</span>
    </div>
  )
}

export default function App() {
  return (
    <div className="relative flex h-screen flex-col overflow-hidden bg-white font-['Noto_Sans','Noto_Sans_CJK_SC',sans-serif] [text-spacing-trim:space-all]">
      <TitleBar />
      <Ribbon />
      <DocTabs />
      <div className="flex min-h-0 flex-1">
        <SlidePanel />
        <Editor />
        <ToolSidebar />
      </div>
      <StatusBar />
      <TaskBar />
      <Watermarks />
    </div>
  )
}
